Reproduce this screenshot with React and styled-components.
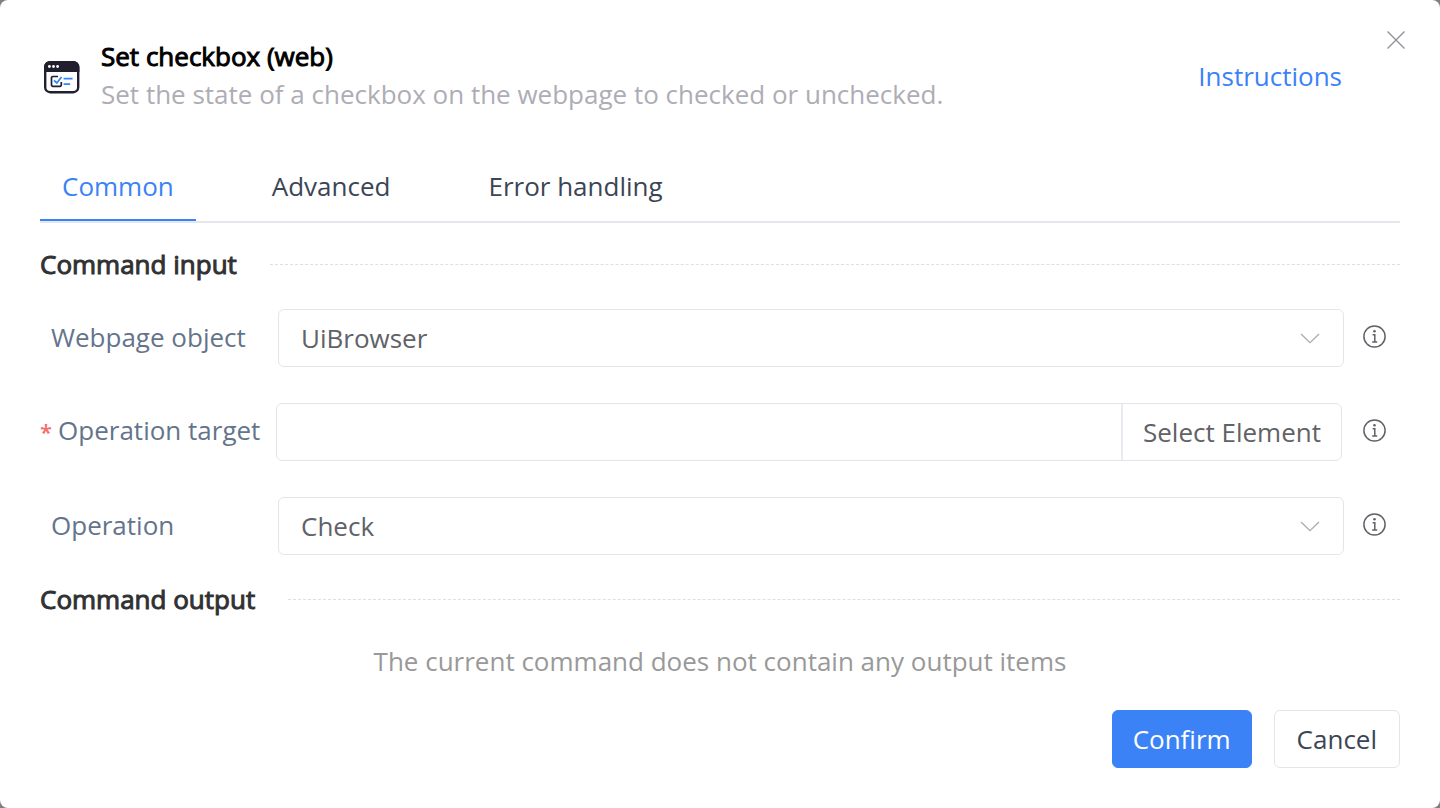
import React, { useState } from "react";
import styled, { createGlobalStyle, css } from "styled-components";

const GlobalStyle = createGlobalStyle`
  *, *::before, *::after { box-sizing: border-box; }
  body {
    margin: 0;
    background: #7f7f7f;
    font-family: "Open Sans", "Noto Sans", sans-serif;
    font-size: 26px;
    line-height: 36px;
    color: #3b4556;
  }
  button, input, select { font: inherit; }
`;

const Dialog = styled.main`
  position: relative;
  display: flex;
  flex-direction: column;
  min-height: 100vh;
  padding: 38px 40px 40px;
  background: #fff;
  border-radius: 8px;
`;

const Header = styled.header`
  display: flex;
  align-items: center;
  padding-right: 58px;
`;

const CommandIcon = styled.svg`
  flex: none;
  width: 43px;
  height: 43px;
  margin: 2px 18px 0 0;
`;

const Heading = styled.div`
  flex: 1;
  padding-bottom: 2px;
`;

const strong = css`
  margin: 0;
  font-size: 26px;
  font-weight: 400;
  -webkit-text-stroke: 1px currentColor;
`;

const Title = styled.h1`
  ${strong}
  color: #000;
`;

const Description = styled.p`
  margin: 2px 0 0;
  color: #aeadb5;
`;

const Link = styled.a`
  color: #3b82f6;
  text-decoration: none;
`;

const CloseButton = styled.button`
  position: absolute;
  top: 26px;
  right: 30px;
  display: flex;
  padding: 4px;
  border: 0;
  background: none;
  color: #909399;
  cursor: pointer;
`;

const Tabs = styled.div`
  display: flex;
  gap: 54px;
  margin-top: 40px;
  border-bottom: 2px solid #e4e7ed;
`;

const Tab = styled.button`
  height: 67px;
  padding: 0 22px 2px;
  border: 0;
  border-bottom: 2px solid ${(p) => (p.$active ? "#3b82f6" : "transparent")};
  background: none;
  color: ${(p) => (p.$active ? "#3b82f6" : "#3b4556")};
  cursor: pointer;
`;

const SectionTitle = styled.h2`
  ${strong}
  display: flex;
  align-items: center;
  gap: 33px;
  color: #303133;

  &::after {
    content: "";
    flex: 1;
    border-top: 1px dashed #dcdfe6;
  }
`;

const Panel = styled.section`
  padding-top: 23px;
`;

const Fields = styled.div`
  display: flex;
  flex-direction: column;
  gap: 36px;
  padding: 27px 0 3px;
`;

const Field = styled.div`
  display: flex;
  align-items: center;
`;

const Label = styled.label`
  flex: none;
  width: ${(p) => (p.$required ? 236 : 238)}px;
  padding-left: ${(p) => (p.$required ? 0 : 11)}px;
  padding-bottom: 3px;
  color: #64748b;
  white-space: nowrap;
`;

const Required = styled.span`
  margin-right: 6px;
  font-size: 22px;
  font-weight: 600;
  color: #f56c6c;
`;

const frame = css`
  height: 58px;
  border: 1px solid #e4e5e9;
  border-radius: 6px;
  background: #fff;
`;

const SelectBox = styled.div`
  position: relative;
  display: flex;
  flex: 1;
  margin-right: 18px;
`;

const Select = styled.select`
  ${frame}
  width: 100%;
  padding: 0 60px 0 22px;
  appearance: none;
  color: #606266;
`;

const Chevron = styled.svg`
  position: absolute;
  top: 50%;
  right: 24px;
  transform: translateY(-50%);
  pointer-events: none;
`;

const TargetBox = styled.div`
  ${frame}
  display: flex;
  flex: 1;
  margin-right: 20px;
  overflow: hidden;
`;

const TargetInput = styled.input`
  flex: 1;
  min-width: 0;
  padding: 0 22px;
  border: 0;
  background: none;
  color: #606266;
`;

const PickButton = styled.button`
  padding: 0 20px;
  border: 0;
  border-left: 2px solid #e9e9f0;
  background: none;
  color: #606266;
  cursor: pointer;
`;

const InfoButton = styled.button`
  display: flex;
  flex: none;
  margin-right: 13px;
  padding: 0 0 4px;
  border: 0;
  background: none;
  color: #606266;
  cursor: pointer;
`;

const Empty = styled.p`
  margin: 26px 0 0;
  text-align: center;
  color: #999;
`;

const Footer = styled.footer`
  display: flex;
  justify-content: flex-end;
  gap: 22px;
  margin-top: auto;
`;

const Button = styled.button`
  height: 58px;
  padding: 0 ${(p) => (p.$primary ? 20 : 22)}px;
  border: 1px solid ${(p) => (p.$primary ? "#3b82f6" : "#e4e5e9")};
  border-radius: 6px;
  background: ${(p) => (p.$primary ? "#3b82f6" : "#fff")};
  color: ${(p) => (p.$primary ? "#fff" : "#3b4556")};
  cursor: pointer;
`;

function Info({ label }) {
  return (
    <InfoButton type="button" aria-label={`About ${label}`}>
      <svg width="25" height="25" viewBox="0 0 25 25" fill="none" stroke="currentColor" strokeWidth="1.5">
        <circle cx="12.5" cy="12.5" r="10.6" />
        <circle cx="12.5" cy="7.3" r="1.3" fill="currentColor" stroke="none" />
        <path d="M10.6 10.7h2.2v7.3M10.2 18.100h5" />
      </svg>
    </InfoButton>
  );
}

function SelectField({ id, label, options }) {
  return (
    <Field>
      <Label htmlFor={id}>{label}</Label>
      <SelectBox>
        <Select id={id} defaultValue={options[0]}>
          {options.map((o) => (
            <option key={o}>{o}</option>
          ))}
        </Select>
        <Chevron width="20" height="12" viewBox="0 0 20 12" fill="none" stroke="#a8abb2" strokeWidth="1.3">
          <path d="M1 2l9 8.6L19 2" />
        </Chevron>
      </SelectBox>
      <Info label={label} />
    </Field>
  );
}

const tabs = ["Common", "Advanced", "Error handling"];

export default function App() {
  const [active, setActive] = useState(tabs[0]);
  return (
    <>
      <GlobalStyle />
      <Dialog>
        <CloseButton type="button" aria-label="Close">
          <svg width="20" height="20" viewBox="0 0 20 20" fill="none" stroke="currentColor" strokeWidth="1.4">
            <path d="M1.5 1.5l17 17M18.5 1.5l-17 17" />
          </svg>
        </CloseButton>
        <Header>
          <CommandIcon viewBox="0 0 43 43" fill="none" aria-hidden="true">
            <rect x="5.2" y="6.2" width="33" height="30" rx="5" stroke="#211e30" strokeWidth="2.4" />
            <path d="M4 16V11a6 6 0 0 1 6-6h23.4a6 6 0 0 1 6 6v5z" fill="#211e30" />
            <g fill="#fff">
              <circle cx="9.4" cy="10.500" r="1.4" />
              <circle cx="13.5" cy="10.500" r="1.4" />
              <circle cx="17.6" cy="10.500" r="1.4" />
            </g>
            <path d="M18 20.5h-5.200a1.300 1.300 0 0 0-1.300 1.300v7.200a1.300 1.300 0 0 0 1.300 1.300h7.200a1.300 1.300 0 0 0 1.300-1.300v-3" stroke="#211e30" strokeWidth="1.700" />
            <path d="M14 24.300l2.800 2.700 4.800-6M23.600 22.700h9M23.600 28.200h6.600" stroke="#2f86ff" strokeWidth="1.800" />
          </CommandIcon>
          <Heading>
            <Title>Set checkbox (web)</Title>
            <Description>Set the state of a checkbox on the webpage to checked or unchecked.</Description>
          </Heading>
          <Link href="#instructions">Instructions</Link>
        </Header>
        <Tabs role="tablist">
          {tabs.map((t) => (
            <Tab key={t} type="button" role="tab" aria-selected={t === active} $active={t === active} onClick={() => setActive(t)}>
              {t}
            </Tab>
          ))}
        </Tabs>
        <Panel>
          <SectionTitle>Command input</SectionTitle>
          <Fields>
            <SelectField id="webpage" label="Webpage object" options={["UiBrowser"]} />
            <Field>
              <Label htmlFor="target" $required>
                <Required>*</Required>Operation target
              </Label>
              <TargetBox>
                <TargetInput id="target" type="text" required />
                <PickButton type="button">Select Element</PickButton>
              </TargetBox>
              <Info label="Operation target" />
            </Field>
            <SelectField id="operation" label="Operation" options={["Check", "Uncheck"]} />
          </Fields>
        </Panel>
        <Panel>
          <SectionTitle>Command output</SectionTitle>
          <Empty>The current command does not contain any output items</Empty>
        </Panel>
        <Footer>
          <Button type="button" $primary>Confirm</Button>
          <Button type="button">Cancel</Button>
        </Footer>
      </Dialog>
    </>
  );
}
